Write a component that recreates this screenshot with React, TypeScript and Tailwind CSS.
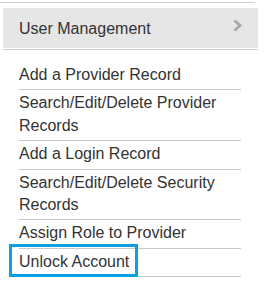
import React from "react";

const items: { label: string; focus?: boolean }[] = [
  { label: "Add a Provider Record" },
  { label: "Search/Edit/Delete Provider Records" },
  { label: "Add a Login Record" },
  { label: "Search/Edit/Delete Security Records" },
  { label: "Assign Role to Provider" },
  { label: "Unlock Account", focus: true },
];

export default function App() {
  return (
    <div
      className="relative w-[264px] h-[285px] overflow-hidden bg-white text-[#333333]"
      style={{ fontFamily: '"Liberation Sans", Arial, sans-serif' }}
    >
      <div className="h-[2px]" />
      <div className="h-px w-[255px] bg-[#d0d0d0]" />
      <div className="h-[5px]" />
      <div className="ml-[3px] w-[255px] h-[40px] bg-[#e6e6e6] flex items-center justify-between pl-[16px] pr-[15px] pt-[2px]">
        <span className="text-[16px] leading-[22px]">User Management</span>
        <svg width="11" height="13" viewBox="0 0 11 13" className="mt-[-7px]">
          <polyline
            points="2.5,1.5 8,6.5 2.5,11.5"
            fill="none"
            stroke="#a8a8a8"
            strokeWidth="2.8"
          />
        </svg>
      </div>
      <div className="h-px" />
      <div className="ml-[3px] h-px w-[255px] bg-[#d0d0d0]" />
      <div className="h-[12px]" />
      <ul className="ml-[19px] w-[222px]">
        {items.map((it) => (
          <li
            key={it.label}
            className="relative border-b border-[#c8c8c8] pt-[2px] pb-[3px] text-[16px] leading-[22.4px]"
          >
            {it.focus && (
              <div className="absolute left-[-10px] top-[-5px] w-[129px] h-[33px] border-[3px] border-[#0aa0e2]" />
            )}
            <span>{it.label}</span>
          </li>
        ))}
      </ul>
    </div>
  );
}
